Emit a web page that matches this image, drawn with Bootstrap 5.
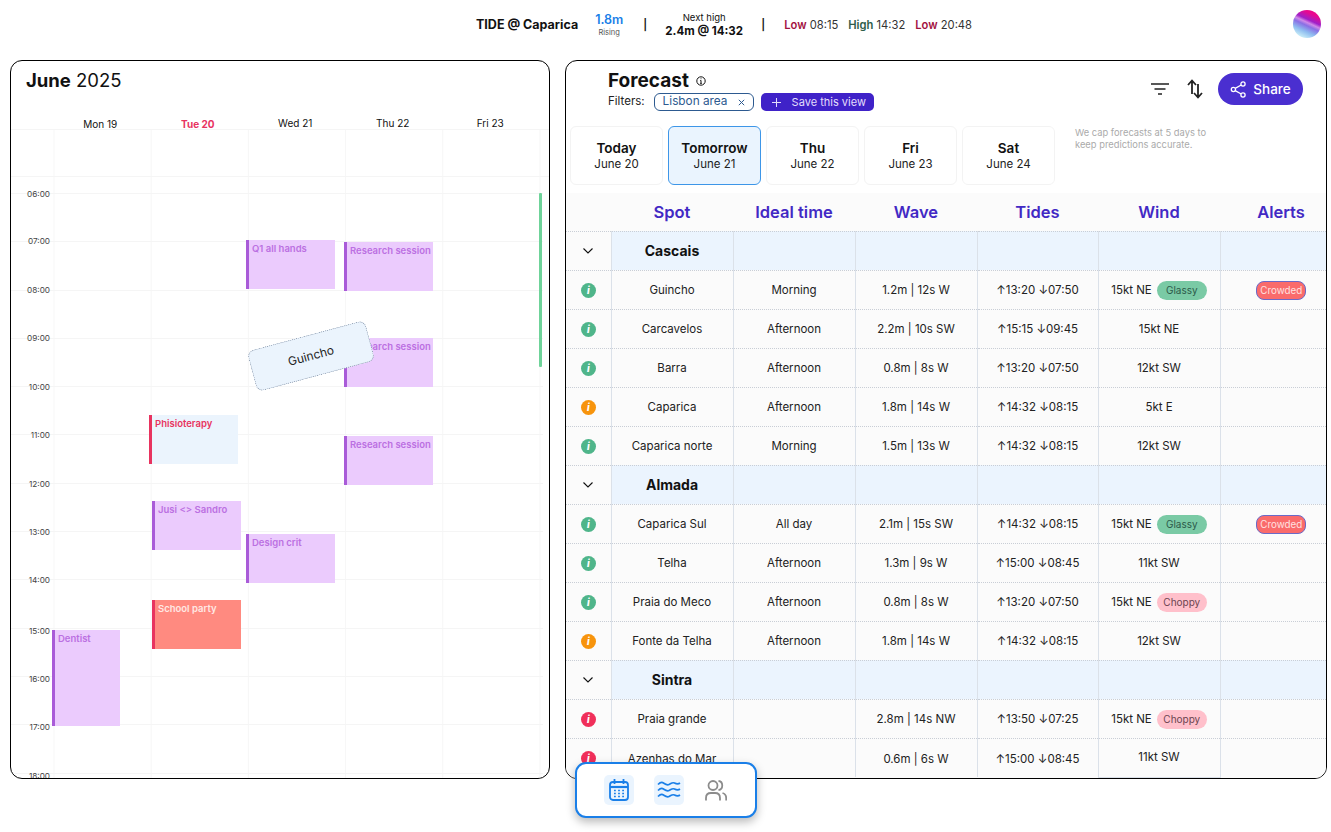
<!doctype html>
<html lang="en">
<head>
<meta charset="utf-8">
<title>Tide forecast</title>
<link href="https://cdn.jsdelivr.net/npm/bootstrap@5.3.0/dist/css/bootstrap.min.css" rel="stylesheet">
<style>
html,body{height:832px;overflow:hidden}
body{font-family:Inter,"Liberation Sans",sans-serif;background:#fff;color:#111;font-size:11.5px;position:relative}
.tb{height:50px;margin-bottom:10px;padding-left:476px;padding-right:10px}
.tb-title{font-size:12.5px;font-weight:700;margin-right:17px}
.tb-lvl{width:28px;line-height:1;margin-right:20px}
.tb-lvl b{color:#1a7fe8;font-size:12.5px;font-weight:600;display:block}
.tb-lvl small{font-size:7.5px;color:#555;display:block;margin-top:2px}
.tb-sep{font-size:11px;font-weight:600;color:#111;width:2px;margin-right:20px}
.tb-sep2{margin-right:21px}
.tb-next{width:78px;line-height:1;margin-right:18px}
.tb-next span{font-size:9.5px;display:block;margin-bottom:3px}
.tb-next b{font-size:11.5px;font-weight:700;display:block}
.tb-tide{font-size:11.2px;color:#333;margin-right:10px}
.tb-tide b{font-weight:600;color:#a3123f}
.tb-tide b.hi{color:#2f5d4a}
.avatar{width:28px;height:28px;border-radius:50%;margin-left:auto;margin-bottom:2px;background:linear-gradient(205deg,#f0047f 0%,#e8088f 20%,#a020c8 38%,#d08ae8 46%,#8a6fe4 54%,#8fbcf0 70%,#c0e6f6 85%,#eef8fc 100%)}
.main{padding-left:10px;gap:15px}
.pane{height:719px;border:1px solid #000;border-radius:12px;overflow:hidden;position:relative;background:#fff}
.pane-cal{width:540px}
.pane-fc{width:762px}
.cal-title{height:46px;padding:7px 0 0 15px;font-size:18.5px;line-height:24px}
.cal-title b{font-weight:700}
.cal-days{height:23px;display:grid;grid-template-columns:40.5px repeat(5,97.5px);text-align:center;font-size:10px;line-height:12px;border-bottom:1px solid #f5f5f5;align-items:end;padding-bottom:0}
.cal-days>div{transform:translateY(1px)}
.cal-days .td{color:#e8335f;font-weight:700}
.up{padding-bottom:1px}
.cal-body{background-image:linear-gradient(90deg,#f6f6f6 1px,transparent 1px);background-position:42.5px 0;background-size:97.2px 100%;background-repeat:repeat-x}
.cal-allday{height:47px;border-bottom:1px solid #f5f5f5}
.cal-gap{height:16px}
.hr{height:48.3px;border-top:1px solid #f5f5f5;width:532px}
.hr span{display:block;width:39px;text-align:right;font-size:8.2px;line-height:10px;color:#444;transform:translateY(-5.5px)}
.hr:nth-child(4) span,.hr:nth-child(5) span,.hr:nth-child(6) span{transform:translateY(-6.5px)}
.hr:nth-child(n+12) span{transform:translateY(-3px)}
.ev{position:absolute;width:89px;height:49px;background:#ebcbfd;border-left:3px solid #a95bd8;color:#bb70e2;font-size:9.5px;font-weight:600;line-height:12px;padding:3px 0 0 3px;white-space:nowrap;overflow:hidden}
.ev-blue{background:#ebf4fd;border-left-color:#e8335f;color:#e8335f}
.ev-red{background:#ff8a80;border-left-color:#e8335f;color:#ffe8e4}
.now{position:absolute;left:528px;top:132px;width:3px;height:174px;background:#6fd39a;border-radius:1px}
.drag{position:absolute;left:239px;top:274px;width:122px;height:42px;transform:rotate(-15deg);background:#ebf4fd;border:1px dotted #8a99ad;border-radius:7px;font-size:12px;color:#222}
.fc-head{height:65px;padding:10px 23px 0 42px}
.fc-title{font-size:19px;font-weight:700;line-height:20px;gap:7px}
.fc-filters{font-size:11.5px;gap:9px;margin-top:2px;color:#222}
.chip-f{height:18px;width:100px;border:1px solid #2d5a90;border-radius:6px;color:#2d5a90;font-size:11.8px;padding:0 8px}
.btn-save{height:18px;width:113px;background:#3f22c8;color:#e4defc;border-radius:5px;font-size:11px;gap:7px;padding:0 0 0 11px;margin-left:-2px}
.btn-share{width:85px;height:32px;border-radius:16px;background:#4a2fd0;color:#fff;font-size:13.5px;font-weight:500;gap:6px;border:0;padding:0;margin-left:15px}
.icon-s{margin-left:18px}
.fc-actions{height:32px;margin-top:2px}
.fc-tabs{padding-left:4px;gap:5px;height:59px;margin-bottom:8px}
.tab-d{width:93px;border:1px solid #f3f3f3;border-radius:6px;line-height:14px;font-size:11.5px;color:#222}
.tab-d b{font-size:13.5px;font-weight:600;color:#111;margin-bottom:2px}
.tab-d.on{background:#eaf4fe;border-color:#3d96e8}
.note{font-size:9.35px;line-height:12px;color:#aaa;width:140px;margin-left:15px;padding-top:1px}
.fc-table{table-layout:fixed;width:776px;margin:0;border-collapse:collapse;--bs-table-bg:transparent;background:#fbfbfb;font-size:11.5px;color:#222}
.fc-table th,.fc-table td{height:39px;padding:3px 0 0;text-align:center;vertical-align:middle;border:0;border-bottom:1px dotted #c9ced6;border-left:1px solid #dbe1e9}
.fc-table thead th{height:38px;font-size:16.5px;font-weight:600;color:#4229c4;border-left:0;padding-top:2px}
.fc-table td:first-child{border-left:0;padding-top:1px}
.fc-table td:last-child,.fc-table td.wc{padding-top:1px}
.fc-table .grp td{background:#ebf4fe;padding-top:0}
.fc-table .grp td:first-child{background:transparent}
.fc-table .grp td:nth-child(2){font-size:14px;font-weight:700;color:#111}
.fc-table tr.lastrow td{border-bottom:0}
.fc-table tr.lastrow td.wlast{border-bottom:1px solid #dbe1e9;transform:translateY(-1px)}
.wtxt{padding-top:2px}
.dot{display:inline-block;width:15px;height:15px;border-radius:50%;color:#fff;font:italic 800 9.5px/15px Inter,sans-serif;text-align:center;vertical-align:middle}
.g{background:#4fb58a}.o{background:#f7940d}.r{background:#f02f5a}
.wind{gap:5px}
.tag{display:inline-block;width:50px;height:19px;border-radius:9.5px;font-size:10px;line-height:19px;text-align:center}
.tag-g{background:#7acaa5;color:#2c5a4a}
.tag-p{background:#ffc0cb;color:#6b4450}
.tag-c{background:#fa6b6b;color:#ffe0e0;border:1px solid #6a6ac8;border-radius:8px;line-height:17px;font-size:9.8px}
.dock{position:absolute;left:575px;top:762px;width:182px;height:56px;background:#fff;border:2px solid #1a7fe8;border-radius:11px;box-shadow:0 4px 10px rgba(0,0,0,.28);gap:20px;padding-left:27px}
.dock-b{width:30px;height:30px;border-radius:5px;padding:0;border:0;background:transparent}
.dock-b.on{background:#eaf4fe}
.ic-people{margin-right:6px}
</style>
</head>
<body>
<header class="tb d-flex align-items-center">
  <div class="tb-title">TIDE @ Caparica</div>
  <div class="tb-lvl text-center"><b>1.8m</b><small>Rising</small></div>
  <div class="tb-sep">|</div>
  <div class="tb-next text-center"><span>Next high</span><b>2.4m @ 14:32</b></div>
  <div class="tb-sep tb-sep2">|</div>
  <div class="tb-tide"><b>Low</b> 08:15</div>
  <div class="tb-tide"><b class="hi">High</b> 14:32</div>
  <div class="tb-tide"><b>Low</b> 20:48</div>
  <div class="avatar"></div>
</header>

<main class="main d-flex">
  <section class="pane pane-cal">
    <div class="cal-title"><b>June</b> 2025</div>
    <div class="cal-days">
      <div></div><div>Mon 19</div><div class="td">Tue 20</div><div class="up">Wed 21</div><div class="up">Thu 22</div><div class="up">Fri 23</div>
    </div>
    <div class="cal-body">
      <div class="cal-allday"></div>
      <div class="cal-gap"></div>
      <div class="hr"><span>06:00</span></div>
      <div class="hr"><span>07:00</span></div>
      <div class="hr"><span>08:00</span></div>
      <div class="hr"><span>09:00</span></div>
      <div class="hr"><span>10:00</span></div>
      <div class="hr"><span>11:00</span></div>
      <div class="hr"><span>12:00</span></div>
      <div class="hr"><span>13:00</span></div>
      <div class="hr"><span>14:00</span></div>
      <div class="hr"><span>15:00</span></div>
      <div class="hr"><span>16:00</span></div>
      <div class="hr"><span>17:00</span></div>
      <div class="hr"><span>18:00</span></div>
    </div>
    <div class="ev" style="left:235px;top:179px">Q1 all hands</div>
    <div class="ev" style="left:333px;top:181px">Research session</div>
    <div class="ev" style="left:333px;top:277px">Research session</div>
    <div class="ev" style="left:333px;top:375px">Research session</div>
    <div class="ev ev-blue" style="left:138px;top:354px">Phisioterapy</div>
    <div class="ev" style="left:141px;top:440px">Jusi &lt;&gt; Sandro</div>
    <div class="ev" style="left:235px;top:473px">Design crit</div>
    <div class="ev ev-red" style="left:141px;top:539px">School party</div>
    <div class="ev" style="left:41px;top:569px;width:68px;height:96px">Dentist</div>
    <div class="now"></div>
    <div class="drag d-flex align-items-center justify-content-center">Guincho</div>
  </section>

  <section class="pane pane-fc">
    <div class="fc-head d-flex justify-content-between">
      <div>
        <div class="fc-title d-flex align-items-center">Forecast
          <svg width="10" height="10" viewBox="0 0 10 10" fill="none" stroke="#111" stroke-width="1"><circle cx="5" cy="5" r="4.2"/><path d="M5 4.400v3M4.300 4.500H5M4.200 7.400h1.600M5 2.400v.8"/></svg>
        </div>
        <div class="fc-filters d-flex align-items-center">Filters:
          <span class="chip-f d-flex align-items-center justify-content-between">Lisbon area
            <svg width="7" height="7" viewBox="0 0 7 7" stroke="#2d5a90" stroke-width="1"><path d="M.8.8l5.400 5.400M6.200.8L.8 6.200"/></svg></span>
          <span class="btn-save d-flex align-items-center">
            <svg width="9" height="9" viewBox="0 0 9 9" stroke="#e4defc" stroke-width="1"><path d="M4.500 0v9M0 4.500h9"/></svg>
            <span class="ps-1">Save this view</span></span>
        </div>
      </div>
      <div class="fc-actions d-flex align-items-center">
        <svg width="18" height="12" viewBox="0 0 18 12" fill="none" stroke="#222" stroke-width="1.5"><path d="M0 1h18M3.500 6h11M7 11h4"/></svg>
        <svg class="icon-s" width="16" height="20" viewBox="0 0 16 20" fill="none" stroke="#222" stroke-width="1.8"><path d="M5 15V2M1 6l4-4.500L9 6M11 5v13M7 14l4 4.500 4-4.500"/></svg>
        <button class="btn-share d-flex align-items-center justify-content-center">
          <svg width="17" height="17" viewBox="0 0 17 17" fill="none" stroke="#fff" stroke-width="1.3"><circle cx="13" cy="3" r="2.100"/><circle cx="3.400" cy="8.500" r="2.100"/><circle cx="13" cy="14" r="2.100"/><path d="M5.200 7.400L11.200 4M5.200 9.600l6 3.400"/></svg>Share</button>
      </div>
    </div>
    <div class="fc-tabs d-flex">
      <div class="tab-d d-flex flex-column align-items-center justify-content-center"><b>Today</b>June 20</div>
      <div class="tab-d on d-flex flex-column align-items-center justify-content-center"><b>Tomorrow</b>June 21</div>
      <div class="tab-d d-flex flex-column align-items-center justify-content-center"><b>Thu</b>June 22</div>
      <div class="tab-d d-flex flex-column align-items-center justify-content-center"><b>Fri</b>June 23</div>
      <div class="tab-d d-flex flex-column align-items-center justify-content-center"><b>Sat</b>June 24</div>
      <div class="note">We cap forecasts at 5 days to keep predictions accurate.</div>
    </div>
    <table class="table fc-table">
      <colgroup><col style="width:45px"><col style="width:122px"><col style="width:122px"><col style="width:122px"><col style="width:121px"><col style="width:122px"><col style="width:122px"></colgroup>
      <thead><tr><th></th><th>Spot</th><th>Ideal time</th><th>Wave</th><th>Tides</th><th>Wind</th><th>Alerts</th></tr></thead>
      <tbody>
        <tr class="grp"><td><svg width="10" height="6" viewBox="0 0 10 6" fill="none" stroke="#111" stroke-width="1.100"><path d="M.5.5L5 5 9.500.5"/></svg></td><td>Cascais</td><td></td><td></td><td></td><td></td><td></td></tr>
        <tr><td><span class="dot g">i</span></td><td>Guincho</td><td>Morning</td><td>1.2m | 12s W</td><td>↑13:20 ↓07:50</td><td class="wc"><div class="wind d-flex justify-content-center align-items-center"><span class="wtxt">15kt NE</span> <span class="tag tag-g">Glassy</span></div></td><td><span class="tag tag-c">Crowded</span></td></tr>
        <tr><td><span class="dot g">i</span></td><td>Carcavelos</td><td>Afternoon</td><td>2.2m | 10s SW</td><td>↑15:15 ↓09:45</td><td>15kt NE</td><td></td></tr>
        <tr><td><span class="dot g">i</span></td><td>Barra</td><td>Afternoon</td><td>0.8m | 8s W</td><td>↑13:20 ↓07:50</td><td>12kt SW</td><td></td></tr>
        <tr><td><span class="dot o">i</span></td><td>Caparica</td><td>Afternoon</td><td>1.8m | 14s W</td><td>↑14:32 ↓08:15</td><td>5kt E</td><td></td></tr>
        <tr><td><span class="dot g">i</span></td><td>Caparica norte</td><td>Morning</td><td>1.5m | 13s W</td><td>↑14:32 ↓08:15</td><td>12kt SW</td><td></td></tr>
        <tr class="grp"><td><svg width="10" height="6" viewBox="0 0 10 6" fill="none" stroke="#111" stroke-width="1.100"><path d="M.5.5L5 5 9.500.5"/></svg></td><td>Almada</td><td></td><td></td><td></td><td></td><td></td></tr>
        <tr><td><span class="dot g">i</span></td><td>Caparica Sul</td><td>All day</td><td>2.1m | 15s SW</td><td>↑14:32 ↓08:15</td><td class="wc"><div class="wind d-flex justify-content-center align-items-center"><span class="wtxt">15kt NE</span> <span class="tag tag-g">Glassy</span></div></td><td><span class="tag tag-c">Crowded</span></td></tr>
        <tr><td><span class="dot g">i</span></td><td>Telha</td><td>Afternoon</td><td>1.3m | 9s W</td><td>↑15:00 ↓08:45</td><td>11kt SW</td><td></td></tr>
        <tr><td><span class="dot g">i</span></td><td>Praia do Meco</td><td>Afternoon</td><td>0.8m | 8s W</td><td>↑13:20 ↓07:50</td><td class="wc"><div class="wind d-flex justify-content-center align-items-center"><span class="wtxt">15kt NE</span> <span class="tag tag-p">Choppy</span></div></td><td></td></tr>
        <tr><td><span class="dot o">i</span></td><td>Fonte da Telha</td><td>Afternoon</td><td>1.8m | 14s W</td><td>↑14:32 ↓08:15</td><td>12kt SW</td><td></td></tr>
        <tr class="grp"><td><svg width="10" height="6" viewBox="0 0 10 6" fill="none" stroke="#111" stroke-width="1.100"><path d="M.5.5L5 5 9.500.5"/></svg></td><td>Sintra</td><td></td><td></td><td></td><td></td><td></td></tr>
        <tr><td><span class="dot r">i</span></td><td>Praia grande</td><td></td><td>2.8m | 14s NW</td><td>↑13:50 ↓07:25</td><td class="wc"><div class="wind d-flex justify-content-center align-items-center"><span class="wtxt">15kt NE</span> <span class="tag tag-p">Choppy</span></div></td><td></td></tr>
        <tr class="lastrow"><td><span class="dot r">i</span></td><td>Azenhas do Mar</td><td></td><td>0.6m | 6s W</td><td>↑15:00 ↓08:45</td><td class="wlast">11kt SW</td><td></td></tr>
      </tbody>
    </table>
  </section>
</main>

<nav class="dock d-flex align-items-center">
  <button class="dock-b on d-flex align-items-center justify-content-center" aria-label="Calendar">
    <svg width="20" height="22" viewBox="0 0 20 22" fill="none" stroke="#1a7fe8" stroke-width="1.800"><rect x="1" y="3" width="18" height="18" rx="3"/><path d="M1 8h18" stroke-width="2.200"/><path d="M5.500 0v5M14.500 0v5"/><path d="M5 11.500h1.800M9.100 11.500h1.800M13.200 11.500h1.800M5 14.500h1.800M9.100 14.500h1.800M13.200 14.500h1.800M5 17.500h1.800M9.100 17.500h1.800M13.200 17.500h1.800" stroke-width="1.500"/></svg>
  </button>
  <button class="dock-b on d-flex align-items-center justify-content-center" aria-label="Waves">
    <svg width="24" height="18" viewBox="0 0 24 18" fill="none" stroke="#1a7fe8" stroke-width="1.700"><path d="M1 3.500C3 1.500 5 1 6.500 2s3.500 2.500 5.500 1.500S15.500 1 17.500 2 21 3.500 23 2M1 9.500C3 7.500 5 7 6.500 8s3.500 2.500 5.500 1.500S15.500 7 17.500 8 21 9.500 23 8M1 15.500C3 13.500 5 13 6.500 14s3.500 2.500 5.500 1.500S15.500 13 17.500 14 21 15.500 23 14"/></svg>
  </button>
  <button class="dock-b d-flex align-items-center justify-content-center" aria-label="People">
    <svg class="ic-people" width="22" height="21" viewBox="0 0 22 21" fill="none" stroke="#8c8c8c" stroke-width="1.800"><circle cx="8" cy="5.500" r="4.500"/><path d="M1 20.500V18c0-3 2-5 5-5h4c3 0 5 2 5 5v2.500M13.500 1c5 .5 5 8.500 0 9M17.500 13c2.500.7 3.700 2.500 3.700 5v2.500"/></svg>
  </button>
</nav>
<script src="https://cdn.jsdelivr.net/npm/bootstrap@5.3.0/dist/js/bootstrap.bundle.min.js"></script>
</body>
</html>
